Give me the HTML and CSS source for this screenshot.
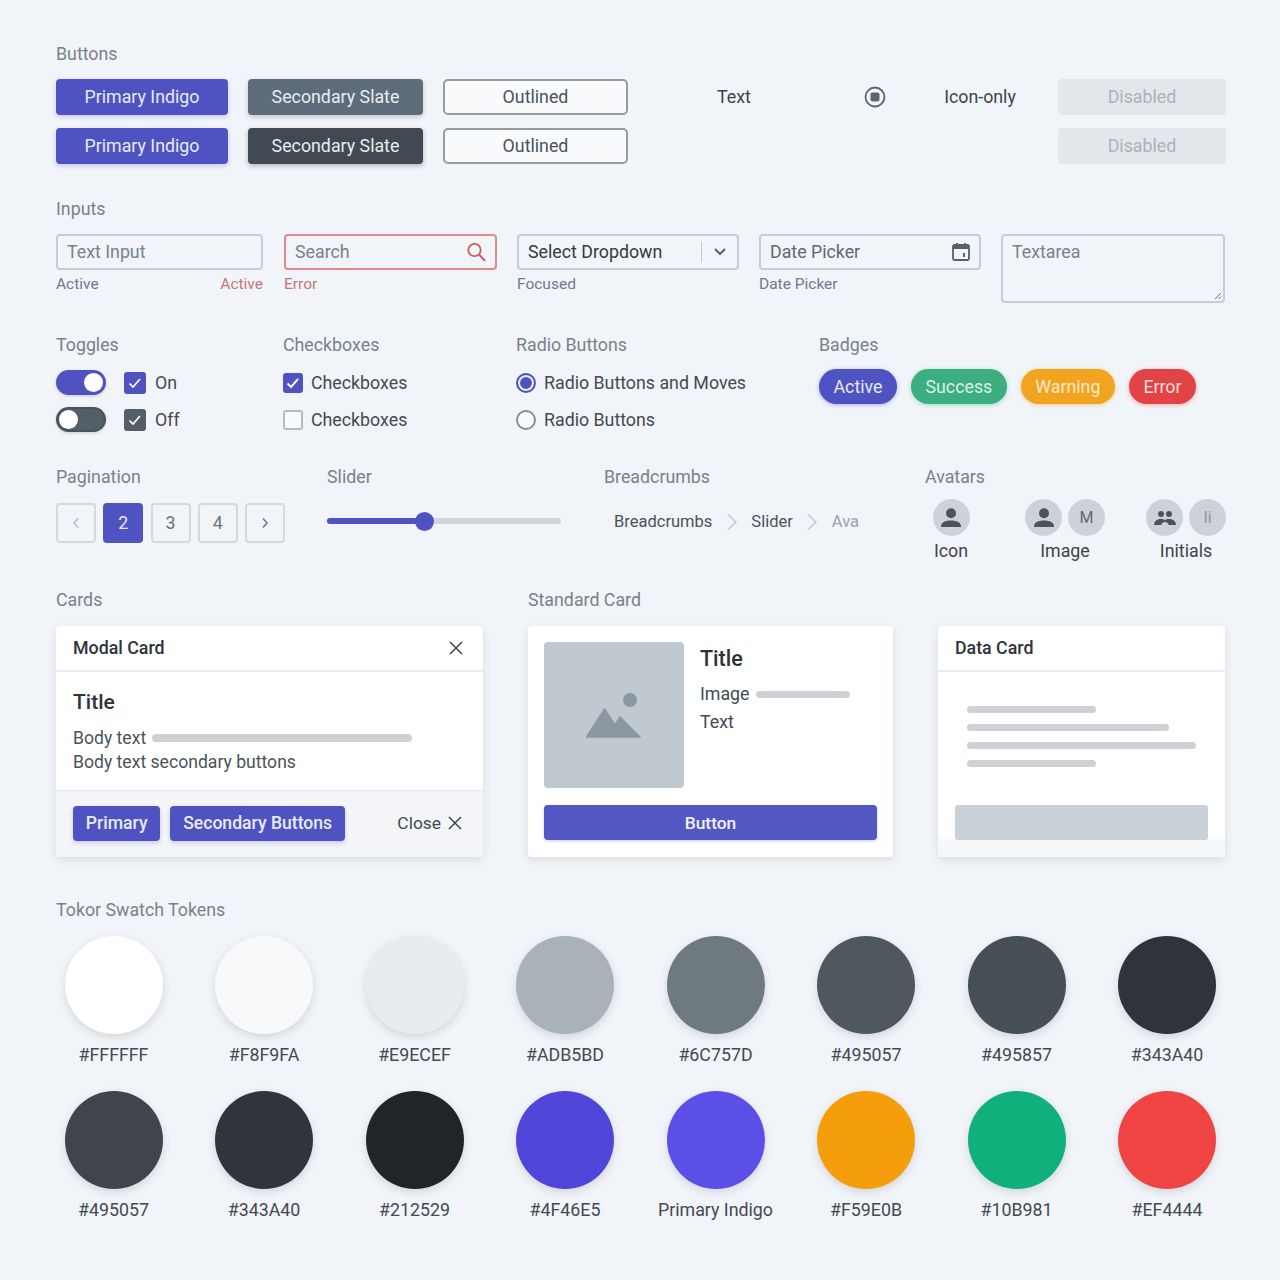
FILE: index.html
```html
<!DOCTYPE html>
<html lang="en">
<head>
    <meta charset="UTF-8">
    <title>UI Kit</title>
    <link rel="stylesheet" href="styles.css">
</head>
<body>
    <div class="label">Buttons</div>
    <div class="button-grid">
        <div class="btn btn-primary">Primary Indigo</div>
        <div class="btn btn-slate">Secondary Slate</div>
        <div class="btn btn-outline">Outlined</div>
        <div class="btn btn-text">Text</div>
        <div class="btn btn-text">
            <svg width="24" height="24" viewBox="0 0 24 24"><circle cx="12" cy="12" r="9.5" fill="none" stroke="#5b6570" stroke-width="1.8"/><rect x="7.5" y="7.5" width="9" height="9" rx="2" fill="#5b6570"/></svg>
        </div>
        <div class="btn btn-text">Icon-only</div>
        <div class="btn btn-disabled">Disabled</div>

        <div class="btn btn-primary">Primary Indigo</div>
        <div class="btn btn-dark">Secondary Slate</div>
        <div class="btn btn-outline">Outlined</div>
        <div class="spacer-cols"></div>
        <div class="btn btn-disabled">Disabled</div>
    </div>

    <div class="label inputs-label">Inputs</div>
    <div class="input-row">
        <div class="field field-text">
            <div class="input placeholder">Text Input</div>
            <div class="caption caption-split"><span>Active</span><span class="caption-error">Active</span></div>
        </div>
        <div class="field field-search">
            <div class="input input-error placeholder">Search
                <svg width="22" height="22" viewBox="0 0 22 22"><circle cx="9.5" cy="9" r="6.2" fill="none" stroke="#c4605f" stroke-width="1.8"/><path d="M14 13.6l5.4 5.6" stroke="#c4605f" stroke-width="2" stroke-linecap="round"/></svg>
            </div>
            <div class="caption caption-error">Error</div>
        </div>
        <div class="field field-select">
            <div class="input input-value">Select Dropdown
                <span class="select-end">
                    <svg width="12" height="8" viewBox="0 0 12 8"><path d="M1.5 1.5L6 6l4.500-4.500" fill="none" stroke="#4f5a64" stroke-width="1.800" stroke-linecap="round"/></svg>
                </span>
            </div>
            <div class="caption">Focused</div>
        </div>
        <div class="field field-select">
            <div class="input input-date">Date Picker
                <svg width="20" height="22" viewBox="0 0 20 22"><rect x="2" y="4" width="16" height="15" rx="1.500" fill="none" stroke="#56616c" stroke-width="1.800"/><path d="M2 5h16v3H2z" fill="#56616c"/><path d="M6 2v3M14 2v3" stroke="#56616c" stroke-width="1.800"/><rect x="12" y="12" width="2" height="4" fill="#56616c"/></svg>
            </div>
            <div class="caption">Date Picker</div>
        </div>
        <div class="textarea placeholder">Textarea
            <svg class="resize-grip" width="8" height="8" viewBox="0 0 8 8"><path d="M7 1L1 7M7 4.500L4.500 7" stroke="#6c757d" stroke-width="1"/></svg>
        </div>
    </div>

    <div class="controls-grid">
        <div>
            <div class="label">Toggles</div>
            <div class="control-list">
                <div class="control">
                    <span class="toggle toggle-on"><i></i></span>
                    <span class="check check-indigo"><svg width="14" height="14" viewBox="0 0 14 14"><path d="M1.500 7.500l3.500 3.500 7-8" fill="none" stroke="#fff" stroke-width="1.700"/></svg></span>
                    <span class="control-text">On</span>
                </div>
                <div class="control">
                    <span class="toggle toggle-off"><i></i></span>
                    <span class="check check-slate"><svg width="14" height="14" viewBox="0 0 14 14"><path d="M1.500 7.500l3.500 3.500 7-8" fill="none" stroke="#fff" stroke-width="1.700"/></svg></span>
                    <span class="control-text">Off</span>
                </div>
            </div>
        </div>
        <div>
            <div class="label">Checkboxes</div>
            <div class="control-list">
                <div class="control control-tight">
                    <span class="check check-small check-indigo"><svg width="14" height="14" viewBox="0 0 14 14"><path d="M1.500 7.500l3.500 3.500 7-8" fill="none" stroke="#fff" stroke-width="1.900"/></svg></span>
                    <span>Checkboxes</span>
                </div>
                <div class="control control-tight">
                    <span class="check check-small check-empty"></span>
                    <span>Checkboxes</span>
                </div>
            </div>
        </div>
        <div>
            <div class="label">Radio Buttons</div>
            <div class="control-list">
                <div class="control control-tight">
                    <span class="radio radio-on"></span>
                    <span>Radio Buttons and Moves</span>
                </div>
                <div class="control control-tight">
                    <span class="radio"></span>
                    <span>Radio Buttons</span>
                </div>
            </div>
        </div>
        <div>
            <div class="label">Badges</div>
            <div class="badges">
                <span class="badge badge-active">Active</span>
                <span class="badge badge-success">Success</span>
                <span class="badge badge-warning">Warning</span>
                <span class="badge badge-error">Error</span>
            </div>
        </div>
    </div>

    <div class="nav-grid">
        <div>
            <div class="label">Pagination</div>
            <div class="pagination">
                <span class="page page-muted"><svg width="8" height="12" viewBox="0 0 8 12"><path d="M6 1.500L2 6l4 4.500" fill="none" stroke="#b4bcc4" stroke-width="1.500"/></svg></span>
                <span class="page page-active">2</span>
                <span class="page">3</span>
                <span class="page">4</span>
                <span class="page"><svg width="8" height="12" viewBox="0 0 8 12"><path d="M2 1.500L6 6l-4 4.500" fill="none" stroke="#6c757d" stroke-width="1.500"/></svg></span>
            </div>
        </div>
        <div>
            <div class="label">Slider</div>
            <div class="slider"><span class="slider-fill"></span><span class="slider-thumb"></span></div>
        </div>
        <div>
            <div class="label">Breadcrumbs</div>
            <div class="crumbs">
                <span>Breadcrumbs</span>
                <svg width="12" height="18" viewBox="0 0 12 18"><path d="M2 1.500l8 7.500-8 7.500" fill="none" stroke="#c3c9cf" stroke-width="1.600"/></svg>
                <span>Slider</span>
                <svg width="12" height="18" viewBox="0 0 12 18"><path d="M2 1.500l8 7.500-8 7.500" fill="none" stroke="#c3c9cf" stroke-width="1.600"/></svg>
                <span class="crumb-muted">Ava</span>
            </div>
        </div>
        <div>
            <div class="label">Avatars</div>
            <div class="avatars">
                <div class="avatar-group avatar-group-icon">
                    <div class="avatar-pair">
                        <span class="avatar"><svg width="24" height="24" viewBox="0 0 24 24"><circle cx="12" cy="7.200" r="5" fill="#4b545d"/><path d="M2 20.500c0-4 4-6 10-6s10 2 10 6q0 .5-.5.5h-19q-.5 0-.5-.5z" fill="#4b545d"/></svg></span>
                    </div>
                    <span class="avatar-name">Icon</span>
                </div>
                <div class="avatar-group avatar-group-image">
                    <div class="avatar-pair">
                        <span class="avatar"><svg width="24" height="24" viewBox="0 0 24 24"><circle cx="12" cy="7.200" r="5" fill="#4b545d"/><path d="M2 20.500c0-4 4-6 10-6s10 2 10 6q0 .5-.5.5h-19q-.5 0-.5-.5z" fill="#4b545d"/></svg></span>
                        <span class="avatar">M</span>
                    </div>
                    <span class="avatar-name">Image</span>
                </div>
                <div class="avatar-group avatar-group-initials">
                    <div class="avatar-pair">
                        <span class="avatar"><svg width="24" height="16" viewBox="0 0 24 16"><circle cx="8" cy="4" r="3" fill="#4b545d"/><circle cx="16" cy="4" r="3" fill="#4b545d"/><path d="M1 14.500C1.500 10.500 4.500 9 8 9c1.800 0 3.200.5 4 1.200.8-.7 2.200-1.200 4-1.200 3.500 0 6.500 1.500 7 5.500 0 .3-.2.5-.5.5H16c-1-2-2.500-3-4-3s-3 1-4 3H1.500c-.3 0-.5-.2-.5-.5z" fill="#4b545d"/></svg></span>
                        <span class="avatar avatar-faint">Ii</span>
                    </div>
                    <span class="avatar-name">Initials</span>
                </div>
            </div>
        </div>
    </div>

    <div class="cards-grid">
        <div class="label">Cards</div>
        <div class="label">Standard Card</div>
        <div></div>

        <div class="card">
            <div class="card-header">Modal Card
                <svg width="14" height="14" viewBox="0 0 14 14"><path d="M1 1l12 12M13 1L1 13" stroke="#3d444b" stroke-width="1.500"/></svg>
            </div>
            <div class="modal-body">
                <div class="modal-title">Title</div>
                <div class="body-line">Body text <span class="bar modal-bar"></span></div>
                <div class="body-line">Body text secondary buttons</div>
            </div>
            <div class="modal-footer">
                <span class="small-btn">Primary</span>
                <span class="small-btn">Secondary Buttons</span>
                <span class="modal-close">Close
                    <svg width="14" height="14" viewBox="0 0 14 14"><path d="M1 1l12 12M13 1L1 13" stroke="#3d444b" stroke-width="1.500"/></svg>
                </span>
            </div>
        </div>

        <div class="card standard-card">
            <div class="standard-top">
                <div class="image-box">
                    <svg width="56" height="46" viewBox="0 0 56 46"><circle cx="45" cy="7" r="7" fill="#8c98a1"/><path d="M1.500 44l18-28 10.500 16 5-8 20 20z" fill="#8c98a1" stroke="#8c98a1" stroke-width="1.500" stroke-linejoin="round"/></svg>
                </div>
                <div class="standard-text">
                    <div class="standard-title">Title</div>
                    <div class="standard-line">Image <span class="bar standard-bar"></span></div>
                    <div class="standard-line">Text</div>
                </div>
            </div>
            <div class="wide-btn">Button</div>
        </div>

        <div class="card">
            <div class="card-header">Data Card</div>
            <div class="data-body">
                <div class="data-lines">
                    <span class="bar data-short"></span>
                    <span class="bar data-mid"></span>
                    <span class="bar data-long"></span>
                    <span class="bar data-short"></span>
                </div>
                <div class="data-block"></div>
            </div>
        </div>
    </div>

    <div class="label">Tokor Swatch Tokens</div>
    <div class="swatches">
        <div class="swatch"><span class="dot c-ffffff"></span>#FFFFFF</div>
        <div class="swatch"><span class="dot c-f8f9fa"></span>#F8F9FA</div>
        <div class="swatch"><span class="dot c-e9ecef"></span>#E9ECEF</div>
        <div class="swatch"><span class="dot c-adb5bd"></span>#ADB5BD</div>
        <div class="swatch"><span class="dot c-6c757d"></span>#6C757D</div>
        <div class="swatch"><span class="dot c-495057"></span>#495057</div>
        <div class="swatch"><span class="dot c-495057b"></span>#495857</div>
        <div class="swatch"><span class="dot c-343a40"></span>#343A40</div>

        <div class="swatch"><span class="dot c-495057c"></span>#495057</div>
        <div class="swatch"><span class="dot c-343a40b"></span>#343A40</div>
        <div class="swatch"><span class="dot c-212529"></span>#212529</div>
        <div class="swatch"><span class="dot c-4f46e5"></span>#4F46E5</div>
        <div class="swatch"><span class="dot c-indigo"></span>Primary Indigo</div>
        <div class="swatch"><span class="dot c-f59e0b"></span>#F59E0B</div>
        <div class="swatch"><span class="dot c-10b981"></span>#10B981</div>
        <div class="swatch"><span class="dot c-ef4444"></span>#EF4444</div>
    </div>
</body>
</html>
```

FILE: styles.css
```css
* {
    box-sizing: border-box;
}

body {
    margin: 0;
    padding: 43px 54px 0 56px;
    background: #f1f4f8;
    color: #3d444b;
    font-family: Roboto, "Liberation Sans", sans-serif;
    font-size: 17.8px;
    line-height: 22px;
}

.label {
    color: #78828c;
    line-height: 22px;
    margin-bottom: 14px;
}

/* Buttons */
.button-grid {
    display: grid;
    grid-template-columns: 172px 175px 185px 172px 70px 100px 1fr;
    column-gap: 20px;
    row-gap: 13px;
}

.btn {
    height: 36px;
    display: flex;
    align-items: center;
    justify-content: center;
    border-radius: 4px;
}

.btn-primary {
    background: #4f53c1;
    color: #e9eaf8;
    box-shadow: 0 2px 5px rgba(79, 70, 229, 0.25);
}

.btn-slate {
    background: #5e6c79;
    color: #e9edf0;
    box-shadow: 0 2px 5px rgba(52, 58, 64, 0.25);
}

.btn-dark {
    background: #414a52;
    color: #e9edf0;
    box-shadow: 0 2px 5px rgba(33, 37, 41, 0.3);
}

.btn-outline {
    background: #f8fafc;
    border: 2px solid #959ca2;
    border-radius: 5px;
    color: #4a535b;
}

.btn-text {
    color: #3d444b;
}

.btn-disabled {
    width: 168px;
    justify-self: end;
    background: #e3e6ea;
    color: #abb2b9;
}

.spacer-cols {
    grid-column: span 3;
}

/* Inputs */
.inputs-label {
    margin-top: 34px;
}

.input-row {
    display: flex;
    column-gap: 20px;
    height: 100px;
}

.field-text {
    width: 207px;
    margin-right: 1px;
}

.field-search {
    width: 213px;
}

.field-select {
    width: 222px;
}

.input {
    height: 36px;
    display: flex;
    align-items: center;
    justify-content: space-between;
    padding: 0 9px;
    border: 2px solid #c6ccd2;
    border-radius: 4px;
}

.placeholder {
    color: #78828c;
}

.input-error {
    border-color: #e08a8a;
    padding-right: 8px;
}

.input-value {
    color: #343a40;
    padding-right: 11px;
}

.input-date {
    color: #5f6973;
    padding-right: 8px;
}

.select-end {
    display: flex;
    align-items: center;
    justify-content: flex-end;
    width: 25px;
    height: 20px;
    border-left: 1px solid #c3c9cf;
}

.caption {
    margin-top: 5px;
    font-size: 15.5px;
    line-height: 18px;
    color: #6f7a90;
}

.caption-split {
    display: flex;
    justify-content: space-between;
}

.caption-error {
    color: #c4777a;
}

.textarea {
    position: relative;
    width: 224px;
    height: 69px;
    padding: 5px 9px;
    border: 2px solid #c6ccd2;
    border-radius: 4px;
}

.resize-grip {
    position: absolute;
    right: 1px;
    bottom: 1px;
}

/* Toggles, checkboxes, radios, badges */
.controls-grid {
    display: grid;
    grid-template-columns: 227px 233px 303px 1fr;
}

.controls-grid .label {
    margin-bottom: 14px;
}

.nav-grid .label,
.cards-grid .label {
    margin-bottom: 15px;
}

.control-list {
    display: flex;
    flex-direction: column;
    row-gap: 12px;
}

.control {
    height: 25px;
    display: flex;
    align-items: center;
    color: #434a52;
}

.control-tight {
    column-gap: 8px;
}

.toggle {
    position: relative;
    width: 50px;
    height: 25px;
    border-radius: 13px;
    border: 2px solid #4f53c1;
    background: #4f53c1;
    box-shadow: 0 1px 3px rgba(33, 37, 41, 0.2);
}

.toggle i {
    position: absolute;
    top: 1px;
    width: 19px;
    height: 19px;
    border-radius: 50%;
    background: #fff;
}

.toggle-on i {
    right: 1px;
}

.toggle-off {
    border-color: #4a535b;
    background: #545e67;
}

.toggle-off i {
    left: 1px;
}

.check {
    display: flex;
    align-items: center;
    justify-content: center;
    width: 22px;
    height: 22px;
    margin-left: 18px;
    border-radius: 3px;
}

.check-small {
    width: 20px;
    height: 20px;
    margin-left: 0;
}

.check-indigo {
    background: #4f53c1;
}

.check-slate {
    background: #545e67;
}

.check-empty {
    background: #f8fafc;
    border: 2px solid #b4bbc2;
}

.control-text {
    margin-left: 9px;
}

.radio {
    width: 20px;
    height: 20px;
    border-radius: 50%;
    border: 2px solid #868e96;
    background: #f8fafc;
}

.radio-on {
    border-color: #4f53c1;
    box-shadow: inset 0 0 0 2px #f1f4f8, inset 0 0 0 10px #4f53c1;
}

.badges {
    display: flex;
    column-gap: 14px;
    margin-top: -1px;
}

.badge {
    height: 35px;
    padding: 0 14.5px;
    display: flex;
    align-items: center;
    border-radius: 18px;
}

.badge-active {
    background: #4f53c1;
    color: #e6e8f8;
    box-shadow: 0 1px 4px rgba(79, 70, 229, 0.4);
}

.badge-success {
    background: #3cae80;
    color: #d8f3e8;
    box-shadow: 0 1px 4px rgba(16, 185, 129, 0.4);
}

.badge-warning {
    background: #f2a31f;
    color: #fdeccb;
    box-shadow: 0 1px 4px rgba(245, 158, 11, 0.4);
}

.badge-error {
    background: #e24445;
    color: #fbdede;
    box-shadow: 0 1px 4px rgba(239, 68, 68, 0.4);
}

/* Pagination, slider, breadcrumbs, avatars */
.nav-grid {
    display: grid;
    grid-template-columns: 271px 277px 321px 1fr;
    margin-top: 34px;
    height: 96px;
}

.pagination {
    display: flex;
    column-gap: 7.25px;
}

.page {
    width: 40px;
    height: 39.5px;
    display: flex;
    align-items: center;
    justify-content: center;
    border: 2px solid #d5d9de;
    border-radius: 4px;
    color: #6c757d;
}

.page-active {
    background: #4f53c1;
    border-color: #4f53c1;
    color: #e6e8f8;
}

.slider {
    position: relative;
    width: 234px;
    height: 6px;
    margin-top: 30px;
    border-radius: 3px;
    background: #d0d5da;
}

.slider-fill {
    position: absolute;
    left: 0;
    top: 0;
    width: 97px;
    height: 6px;
    border-radius: 3px;
    background: #4f53c1;
}

.slider-thumb {
    position: absolute;
    left: 88px;
    top: -6.5px;
    width: 19px;
    height: 19px;
    border-radius: 50%;
    background: #4f53c1;
}

.crumbs {
    display: flex;
    align-items: center;
    column-gap: 13.5px;
    padding-left: 10px;
    margin-top: 23px;
    font-size: 16.5px;
    color: #4a535b;
}

.crumb-muted {
    color: #9aa3ab;
}

.avatars {
    display: flex;
    margin-top: -4px;
}

.avatar-group {
    display: flex;
    flex-direction: column;
    align-items: center;
}

.avatar-group-icon {
    width: 52px;
}

.avatar-group-image {
    width: 80px;
    margin-left: 48px;
}

.avatar-group-initials {
    width: 78px;
    margin-left: 42px;
}

.avatar-pair {
    display: flex;
    column-gap: 6px;
}

.avatar {
    width: 37px;
    height: 37px;
    display: flex;
    align-items: center;
    justify-content: center;
    border-radius: 50%;
    background: #cdd2d9;
    color: #5f6973;
    font-size: 16px;
}

.avatar-faint {
    color: #8c96a0;
}

.avatar-name {
    margin-top: 4px;
    color: #3d444b;
}

/* Cards */
.cards-grid {
    display: grid;
    grid-template-columns: 427px 365px 287px;
    column-gap: 45px;
    margin-top: 27px;
    margin-bottom: 42px;
}

.card {
    height: 231px;
    background: #fff;
    border-radius: 4px;
    box-shadow: 0 3px 8px rgba(52, 58, 64, 0.12);
    overflow: hidden;
}

.card-header {
    height: 46px;
    display: flex;
    align-items: center;
    justify-content: space-between;
    padding: 0 20px 1px 17px;
    border-bottom: 2px solid #e9ecef;
    font-weight: 500;
    color: #2d3339;
}

.modal-body {
    height: 118px;
    padding: 17px 17px 0;
}

.modal-title {
    font-size: 21px;
    font-weight: 500;
    line-height: 26px;
    color: #2d3339;
    margin-bottom: 11px;
}

.body-line {
    display: flex;
    align-items: center;
    column-gap: 6px;
    height: 24px;
    font-size: 17.6px;
    color: #4a535b;
}

.bar {
    display: block;
    height: 8px;
    border-radius: 4px;
    background: #ced2d6;
}

.modal-bar {
    width: 260px;
}

.modal-footer {
    height: 67px;
    display: flex;
    align-items: center;
    column-gap: 10px;
    padding: 0 21px 2px 17px;
    border-top: 1px solid #e3e6ea;
    background: #f3f5f8;
}

.small-btn {
    height: 35px;
    display: flex;
    align-items: center;
    padding: 0 12.8px;
    border-radius: 4px;
    background: #4f53c1;
    color: #e9eaf8;
    font-size: 17.6px;
    font-weight: 500;
    box-shadow: 0 2px 4px rgba(79, 70, 229, 0.25);
}

.modal-close {
    display: flex;
    align-items: center;
    column-gap: 7px;
    margin-left: auto;
    font-size: 17.4px;
    color: #434a52;
}

.standard-card {
    padding: 16px;
}

.standard-top {
    display: flex;
    column-gap: 16px;
    height: 163px;
}

.image-box {
    width: 140px;
    height: 146px;
    display: flex;
    align-items: center;
    justify-content: center;
    padding: 2px 2px 0 0;
    border-radius: 4px;
    background: #c0c8d0;
}

.standard-title {
    font-size: 21.5px;
    font-weight: 500;
    line-height: 26px;
    color: #2d3339;
    margin: 4px 0 8px;
}

.standard-line {
    display: flex;
    align-items: center;
    column-gap: 6px;
    height: 28px;
    color: #434a52;
}

.standard-bar {
    width: 94px;
    height: 7px;
}

.wide-btn {
    height: 35px;
    display: flex;
    align-items: center;
    justify-content: center;
    border-radius: 4px;
    background: #5357c2;
    color: #f0f1fb;
    font-size: 17.4px;
    font-weight: 500;
    box-shadow: 0 1px 3px rgba(79, 70, 229, 0.3);
}

.data-body {
    height: 185px;
    padding: 34px 17px 0;
    background: linear-gradient(#fff 88%, #f5f7f9 92%);
}

.data-lines {
    display: flex;
    flex-direction: column;
    row-gap: 11px;
    padding-left: 12px;
    height: 99px;
}

.data-lines .bar {
    height: 7px;
}

.data-short {
    width: 129px;
}

.data-mid {
    width: 202px;
}

.data-long {
    width: 229px;
}

.data-block {
    height: 35px;
    border-radius: 3px;
    background: #c9d0d8;
}

/* Swatches */
.swatches {
    display: grid;
    grid-template-columns: repeat(8, 150.5px);
    row-gap: 25px;
    margin: 15px -19px 0 -17.75px;
}

.swatch {
    display: flex;
    flex-direction: column;
    align-items: center;
    row-gap: 10px;
    color: #434a52;
}

.dot {
    width: 98px;
    height: 98px;
    border-radius: 50%;
    box-shadow: 0 3px 8px rgba(52, 58, 64, 0.16);
}

.c-ffffff { background: #ffffff; }
.c-f8f9fa { background: #f8f9fa; }
.c-e9ecef { background: #e9ecef; }
.c-adb5bd { background: #a9b1b9; }
.c-6c757d { background: #6f7a80; }
.c-495057 { background: #4f585f; }
.c-495057b { background: #474f56; }
.c-343a40 { background: #2f343b; }
.c-495057c { background: #40454c; }
.c-343a40b { background: #30353b; }
.c-212529 { background: #212529; }
.c-4f46e5 { background: #4f46d9; }
.c-indigo { background: #5b4fe8; }
.c-f59e0b { background: #f59e0b; }
.c-10b981 { background: #10b07d; }
.c-ef4444 { background: #ef4444; }
```
